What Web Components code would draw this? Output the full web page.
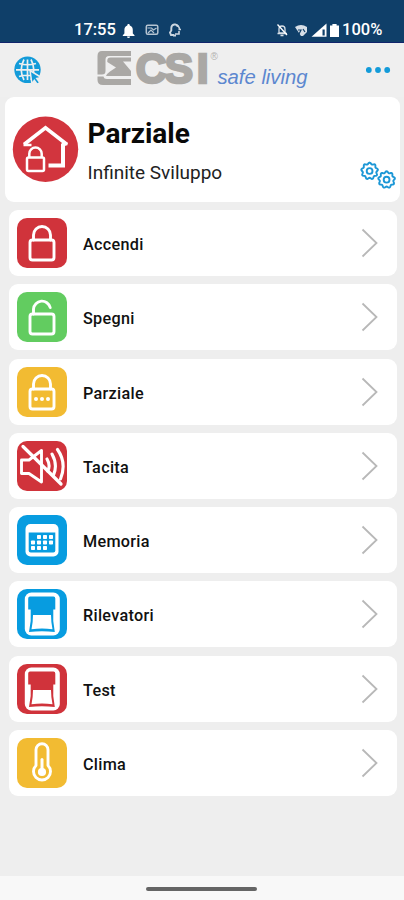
<!DOCTYPE html>
<html lang="it">
<head>
<meta charset="utf-8">
<title>CSI safe living</title>
<style>
html,body{margin:0;height:100%;background:#eee;overflow:hidden}
body{font-family:Roboto,"Noto Sans",sans-serif;color:#111}
</style>
</head>
<body>
<csi-app></csi-app>
<script>
function define(name, html) {
  const t = document.createElement('template');
  t.innerHTML = html;
  customElements.define(name, class extends HTMLElement {
    constructor() {
      super();
      this.attachShadow({mode: 'open'}).append(t.content.cloneNode(true));
    }
  });
}

/* Line icons on a 50x50 grid, drawn in white over the tile colour */
const lockBody = '<rect x="13" y="22" width="24" height="20" rx="2.500"/>';
const closedShackle = '<path d="M16.500 22V17a8.500 8.500 0 0 1 17 0V22"/>';
const glyphs = {
  lock: lockBody + closedShackle,
  unlock: lockBody + '<path d="M16.500 22V17a8.500 8.500 0 0 1 16.700-1.500"/>',
  partial: lockBody + closedShackle + '<g fill="#fff" stroke="none"><circle cx="19" cy="32" r="2"/><circle cx="25" cy="32" r="2"/><circle cx="31" cy="32" r="2"/></g>',
  mute: '<path d="M4.500 19H12L24.500 9.500V41L12 32.500H4.500Z"/><path d="M6 5.500L44 43" stroke-width="3.300"/><path d="M30 18Q34 25 30.500 30M35 13Q41 24 36.500 34M40.500 8.500Q50 22 43.500 38" stroke-width="3.100"/>',
  calendar: '<rect x="8.500" y="9" width="33" height="32.500" rx="5" fill="#fff" stroke="none"/><path d="M11.700 17.500H38.300V35.500a2 2 0 0 1-2 2H13.700a2 2 0 0 1-2-2Z" fill="var(--tile)" stroke="none"/><g fill="#fff" stroke="none">' +
    [[20,20],[26,20],[32,20],[14,25.500],[20,25.500],[26,25.500],[32,25.500],[14,31],[20,31],[26,31]].map(p => `<rect x="${p[0]}" y="${p[1]}" width="4" height="4" rx=".8"/>`).join('') + '</g>',
  detector: '<g stroke="none"><rect x="7.800" y="3.500" width="35" height="43" rx="6.500" fill="#fff"/><path fill="var(--tile)" d="M13 7.500H36.500Q38.300 7.500 38.300 9.500V20.500H36.300Q35.500 32 37.800 43Q25 41.500 12 43Q14.500 32 13.700 20.500H11.200V9.500Q11.200 7.500 13 7.500Z"/><path fill="#fff" d="M16 26H34Q34 33 35.500 40.300Q25 38.500 14.500 40.300Q16 33 16 26Z"/></g>',
  thermo: '<path d="M19 27.500V11.700a6 6 0 0 1 12 0V27.500a8.500 8.500 0 1 1-12 0Z" stroke-width="2.900"/><circle cx="25" cy="34" r="4.100" fill="#fff" stroke="none"/><path d="M25 33V21.500" stroke-width="3"/>'
};

class IconTile extends HTMLElement {
  connectedCallback() {
    this.attachShadow({mode: 'open'}).innerHTML = `<style>:host{--tile:${this.getAttribute('color')};display:block;width:50px;height:50px;border-radius:10px;background:var(--tile);overflow:hidden}svg{display:block}</style>
    <svg width="50" height="50" viewBox="0 0 50 50" fill="none" stroke="#fff" stroke-width="2.900" stroke-linejoin="round" stroke-linecap="round">${glyphs[this.getAttribute('glyph')]}</svg>`;
  }
}
customElements.define('icon-tile', IconTile);

define('status-bar', `<style>
:host{display:flex;box-sizing:border-box;height:43px;background:#0f3f69;border-bottom:1px solid #10246b;padding:17px 21px 0 74px;justify-content:space-between;color:#fff;font:500 16.500px/26px Roboto,sans-serif}
div{display:flex;align-items:center;height:26px}
.l span{width:42px}.r span{margin-left:2px;width:41px}
svg{display:block}
</style>
<div class="l"><span>17:55</span>
<svg width="70" height="20" viewBox="0 0 70 20"><path fill="#fff" d="M12.500 4c1 0 1.300.6 1.300 1.500 2.200.8 3 2.400 3 4.500v3.500l1.700 1.700v.8H6.800v-.8L8.400 13.500V10c0-2.100.8-3.700 2.900-4.500 0-.9.300-1.500 1.200-1.500ZM11 16.500h3a1.500 1.500 0 0 1-3 0Z"/>
<rect x="30.300" y="5.300" width="11.500" height="9" rx="1.500" fill="none" stroke="#b5c4d2" stroke-width="1.500"/><path d="M31.500 8h4l2 2 3-2M32 13l3-3 3 3" fill="none" stroke="#b5c4d2" stroke-width="1.200"/>
<path d="M58 15h-3l-1-2.500 1.300-2V8a3.700 3.700 0 0 1 7-1.500M57 15.500h3" fill="none" stroke="#cbd5df" stroke-width="1.900"/><path d="M60 5.500a4 4 0 0 1 3.500 4M62.500 9.500h2.500M59 14h4v-3" fill="none" stroke="#cbd5df" stroke-width="1.600"/></svg></div>
<div class="r"><svg width="64" height="20" viewBox="0 0 64 20"><path d="M3 13V9a3 3 0 0 1 6 0v4ZM1.500 13.500H11M4.500 15.500h3" fill="none" stroke="#d7dfe7" stroke-width="1.300"/><path d="M1.500 4.500L11 15" stroke="#fff" stroke-width="1.300"/>
<path d="M19 7q6-4 12 0v5l-4 4h-2Z" fill="#d7dfe7"/><path d="M22 10h3l-2 4M27 9l2 3" fill="none" stroke="#0f3f69" stroke-width="1.200"/>
<path d="M35.500 16.700L50.500 3.500V16.700Z" fill="#fff"/><path d="M46.500 9.500h2.200v6h-2.200Z" fill="#0f3f69"/>
<path d="M54 5.500h2.400V4h4.200v1.500h2.400V17H54Z" fill="#fff"/></svg><span>100%</span></div>`);

define('brand-bar', `<style>
:host{display:grid;grid-template-columns:97px 1fr 38px;height:54px;background:#efefef}
svg{display:block}
.globe{margin:13px 0 0 13px}.dots{margin-top:22px}
</style>
<svg class="globe" width="29" height="29" viewBox="0 0 29 29"><circle cx="14.500" cy="13.800" r="13.200" fill="#139bd9"/><g stroke="#efefef" fill="none" stroke-width="1.700"><path d="M14.500 3.500v20.500M3 13.800H26M6 7.500Q14.500 10 23 7.500M6 20.500Q14.500 18 23 20.500M11 3.500Q5.500 13.800 11 24M18 3.500Q23.500 13.800 18 24"/></g><path d="M17 14.500L28.300 21.500l-4.500 1 3 4-2.700 1.800-2.800-4L19 28Z" fill="#139bd9" stroke="#efefef" stroke-width="1.500"/></svg>
<svg width="230" height="54" viewBox="97 43 230 54">
<g fill="#aaa8a5"><path d="M131 51H102Q97.500 51 97.500 56V74.500H102Q105.500 74.500 105.500 71V59.500Q105.500 56 109 56H131Z"/>
<path d="M131 57.500V61.500H123L131 71V76H106Q107 73.500 110 71.500L116 67.500L107.300 62V60.500Q107.300 57.500 110.500 57.500Z"/>
<path d="M97.500 76.500H103.500Q104 79 107 79H131V85H103Q97.500 85 97.500 80Z"/></g>
<text transform="translate(0 83) scale(1 1)" x="135.800 164.800 196.800" y="0" fill="#aaa8a5" stroke="#aaa8a5" font-family="Liberation Sans,sans-serif" font-weight="bold" font-size="42.500" stroke-width="2.600">CSI</text>
<text x="210.500" y="60" font-family="Liberation Sans,sans-serif" font-size="10" fill="#b4b2b0">®</text>
<text x="217.500" y="84" font-family="Liberation Sans,sans-serif" font-style="italic" font-size="19.500" fill="#5c87cf" textLength="90" lengthAdjust="spacingAndGlyphs">safe living</text></svg>
<svg class="dots" width="38" height="10" viewBox="366 65 38 10" fill="#139bd9"><circle cx="368.800" cy="70" r="2.900"/><circle cx="378" cy="70" r="2.900"/><circle cx="387.200" cy="70" r="2.900"/></svg>`);

/* Scalloped cog outline with nine lobes */
function cog(cx, cy) {
  const pts = [];
  for (let i = 0; i <= 90; i++) {
    const a = i / 90 * Math.PI * 2, r = 7.600 + 0.800 * Math.cos(a * 9);
    pts.push((cx + r * Math.sin(a)).toFixed(2) + ' ' + (cy - r * Math.cos(a)).toFixed(2));
  }
  return `<path d="M${pts.join('L')}Z"/><circle cx="${cx}" cy="${cy}" r="2.900"/>`;
}

define('state-card', `<style>
:host{display:flex;box-sizing:border-box;height:105px;margin:0 4px 0 5px;background:#fff;border-radius:9px;padding-left:7px}
.badge{margin-top:19px;flex:none}
.t{padding:20px 0 0 8.500px;flex:1}
h1{margin:0;font:700 28px/34px Roboto,sans-serif;color:#090909}
p{margin:10px 0 0;font:400 19px/24px Roboto,sans-serif;color:#222}
.gears{margin:62px 3px 0 0;flex:none}
</style>
<svg class="badge" width="67" height="67" viewBox="0 0 67 67"><circle cx="33.500" cy="33.200" r="32.700" fill="#d2353e"/><g fill="none" stroke="#fff"><path d="M12 28.500L33.500 11.800L55 28.500" stroke-width="3.600"/><path d="M11.500 29H19.500M50 28H55.500" stroke-width="2.600"/><path d="M51 27.500V49.500H36.500" stroke-width="4"/><rect x="15" y="41.500" width="17" height="13.500" rx="1.500" stroke-width="2.500"/><path d="M17.300 41V37.700a6.200 6.200 0 0 1 12.400 0V41" stroke-width="2.500"/></g></svg>
<div class="t"><h1><slot name="title"></slot></h1><p><slot name="sub"></slot></p></div>
<svg class="gears" width="38" height="32" viewBox="0 0 38 32" fill="none" stroke="#1c97d6" stroke-width="1.900">${cog(10.6, 12)}${cog(27.6, 20.7)}</svg>`);

define('menu-row', `<style>
:host{display:flex;align-items:center;box-sizing:border-box;height:66px;background:#fff;border-radius:9px;padding:0 19px 0 8px}
.label{flex:1;margin-left:16px;font:500 16.200px/22px Roboto,sans-serif;letter-spacing:.3px;color:#111;padding-top:4px}
</style><slot name="icon"></slot><div class="label"><slot></slot></div>
<svg width="17" height="30" viewBox="0 0 17 30"><path d="M1.500 1.500L15.500 15L1.500 28.500" fill="none" stroke="#b8b8b8" stroke-width="1.800"/></svg>`);

define('home-bar', `<style>:host{display:flex;height:24px;background:#f8f8f8;justify-content:center;align-items:center}i{display:block;width:111px;height:4px;border-radius:2px;background:#656565;margin:2px 0 0 -1px}</style><i></i>`);

define('csi-app', `<style>
:host{display:flex;flex-direction:column;height:900px;background:#eee}
main{flex:1;display:flex;flex-direction:column;gap:8.250px;padding:8px 7px 0 9px}
</style>
<status-bar></status-bar><brand-bar></brand-bar>
<state-card><span slot="title">Parziale</span><span slot="sub">Infinite Sviluppo</span></state-card>
<main>${[
  ['Accendi','lock','#d0333b'],['Spegni','unlock','#62cc60'],['Parziale','partial','#f2bb32'],['Tacita','mute','#d0333b'],
  ['Memoria','calendar','#079ce0'],['Rilevatori','detector','#079ce0'],['Test','detector','#d0333b'],['Clima','thermo','#f2bb32']
].map(r => `<menu-row><icon-tile slot="icon" glyph="${r[1]}" color="${r[2]}"></icon-tile>${r[0]}</menu-row>`).join('')}</main>
<home-bar></home-bar>`);
</script>
</body>
</html>
